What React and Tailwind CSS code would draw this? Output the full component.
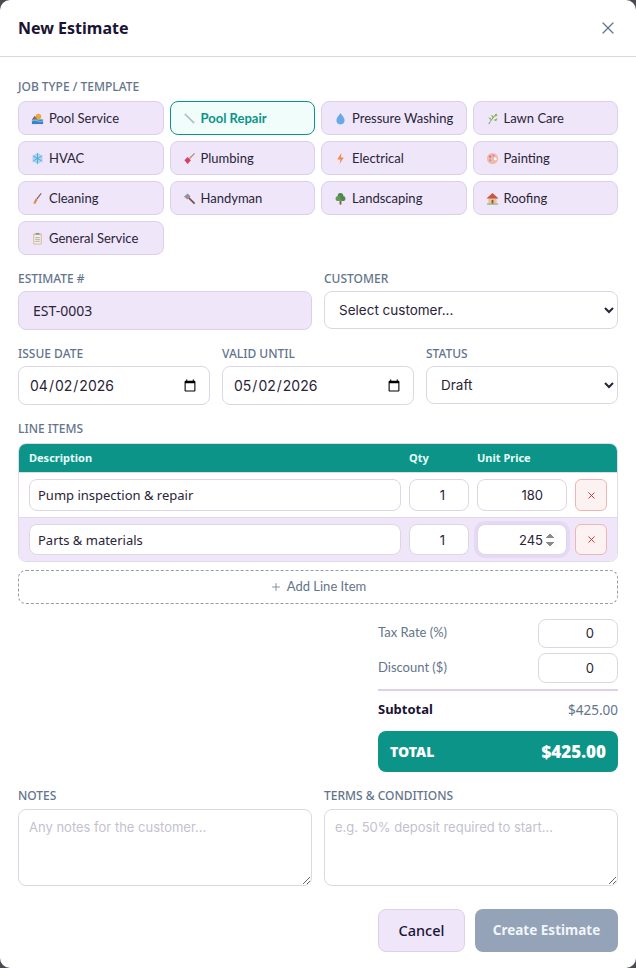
import { X, Plus } from 'lucide-react'

const labelCls = 'block text-[12px] leading-[14px] font-medium uppercase text-[#64748b] font-["Noto_Sans",sans-serif]'
const fieldCls = 'bg-white border border-[#ddd6e3] rounded-[8px] text-[13.5px] text-[#2a2438] font-["Inter",sans-serif] outline-none'

const Icon = ({ children }) => (
  <svg viewBox="0 0 14 14" className="w-[13px] h-[13px] shrink-0">{children}</svg>
)

const icons = {
  pool: (
    <Icon>
      <rect x="1" y="8" width="12" height="5" fill="#3b82c4" />
      <circle cx="8" cy="5" r="3" fill="#f0a63c" />
      <path d="M1 8l3-4 3 4z" fill="#7c6a5a" />
      <path d="M1 9.5q3-1.5 6 0t6 0" stroke="#8ecbf0" fill="none" />
    </Icon>
  ),
  wrench: (
    <Icon>
      <path d="M3 3l8 8" stroke="#b6bcc4" strokeWidth="1.8" strokeLinecap="round" />
      <path d="M1.5 3.5L3.5 1.5M10.5 12.5l2-2" stroke="#c8cdd3" strokeWidth="1.4" />
    </Icon>
  ),
  drop: (
    <Icon>
      <path d="M7 1C5 4 2.6 6.2 2.6 9a4.4 4.4 0 0 0 8.8 0C11.4 6.2 9 4 7 1z" fill="#6aa9e6" />
    </Icon>
  ),
  herb: (
    <Icon>
      <path d="M3 13C5 9 8 6 11 2" stroke="#6f9a3f" fill="none" />
      <path d="M5 9L2.5 6l3 .5zM7 7L5.5 3l3 1.5zM8 8.5l4.5-2-1.5 3.5zM9 5l3.5-1L11 1.5z" fill="#8bb755" />
    </Icon>
  ),
  snow: (
    <Icon>
      <circle cx="7" cy="7" r="5.5" fill="#a5d4ee" />
      <path d="M7 1v12M1.8 4l10.400 6M1.800 10l10.400-6" stroke="#5da4d0" strokeWidth="1" />
    </Icon>
  ),
  plunger: (
    <Icon>
      <path d="M7 7l5.500-5.500" stroke="#b98a5e" strokeWidth="1.3" />
      <path d="M1.500 9L5 5.500 8.500 9 5 13z" fill="#dc3f5e" />
    </Icon>
  ),
  bolt: (
    <Icon>
      <path d="M8 1L3.500 8H7l-1 5 4.500-7H7.500z" fill="#f08a4b" />
    </Icon>
  ),
  palette: (
    <Icon>
      <circle cx="7" cy="7" r="6" fill="#f2b8a8" />
      <circle cx="4.500" cy="5" r="1.100" fill="#d9607a" />
      <circle cx="8" cy="3.800" r="1.100" fill="#c77ad6" />
      <circle cx="4.500" cy="9" r="1.100" fill="#7aa6d6" />
      <circle cx="10" cy="7.500" r="1.500" fill="#fff" />
    </Icon>
  ),
  broom: (
    <Icon>
      <path d="M11 1.500L6 8" stroke="#7a5a48" strokeWidth="1.1" />
      <path d="M5 7l2 1.500L4.500 13 2.500 12z" fill="#e08a4c" />
    </Icon>
  ),
  hammer: (
    <Icon>
      <path d="M6 6l6.500 6.500" stroke="#7a4f4a" strokeWidth="1.8" />
      <path d="M1 5l4-3.500 3 3L5 8z" fill="#8f949c" />
    </Icon>
  ),
  tree: (
    <Icon>
      <rect x="6" y="9" width="2" height="4.500" fill="#8a5a3c" />
      <circle cx="7" cy="4" r="3" fill="#4e8a4a" />
      <circle cx="4.500" cy="7" r="2.800" fill="#5f9a57" />
      <circle cx="9.500" cy="7" r="2.800" fill="#4e8a4a" />
    </Icon>
  ),
  house: (
    <Icon>
      <rect x="2.500" y="6" width="9" height="6.500" fill="#e9c39a" />
      <path d="M.5 7L7 1l6.500 6z" fill="#c9573f" />
      <rect x="6" y="8.500" width="2" height="4" fill="#8a5a3c" />
      <rect x="1" y="12.500" width="12" height="1" fill="#6aa25a" />
    </Icon>
  ),
  clipboard: (
    <Icon>
      <rect x="2.500" y="1.500" width="9" height="12" rx="1" fill="#d9b48f" />
      <rect x="3.500" y="3" width="7" height="9.500" fill="#f1efe9" />
      <rect x="5" y="1" width="4" height="2" fill="#8f949c" />
      <path d="M4.500 6h5M4.500 8h5M4.500 10h5" stroke="#9aa0a8" strokeWidth=".8" />
    </Icon>
  ),
}

const jobTypes = [
  ['pool', 'Pool Service'],
  ['wrench', 'Pool Repair', true],
  ['drop', 'Pressure Washing'],
  ['herb', 'Lawn Care'],
  ['snow', 'HVAC'],
  ['plunger', 'Plumbing'],
  ['bolt', 'Electrical'],
  ['palette', 'Painting'],
  ['broom', 'Cleaning'],
  ['hammer', 'Handyman'],
  ['tree', 'Landscaping'],
  ['house', 'Roofing'],
  ['clipboard', 'General Service'],
]

function JobChip({ icon, name, active }) {
  return (
    <button
      type="button"
      className={
        active
          ? 'h-[34px] flex items-center gap-[5px] pl-[12px] rounded-[8px] border border-[#0d9488] bg-[#f0fdfa] text-[13px] font-bold text-[#0d9488] font-["Lato",sans-serif]'
          : 'h-[34px] flex items-center gap-[5px] pl-[12px] rounded-[8px] border border-[#ddd0ea] bg-[#efe6f9] text-[13px] text-[#2a2438] font-["Lato",sans-serif]'
      }
    >
      {icons[icon]}
      <span className="pt-px">{name}</span>
    </button>
  )
}

function LineRow({ desc, price, alt, focused }) {
  const h = alt ? 'h-[31px]' : 'h-[32px]'
  return (
    <div className={`flex gap-2 px-[10px] py-[6px] border-t border-[#e2daea] ${alt ? 'bg-[#efe6f9]' : 'bg-white'}`}>
      <input
        defaultValue={desc}
        className={`${fieldCls} flex-1 min-w-0 px-2 text-[13px] font-["Noto_Sans",sans-serif] ${h}`}
      />
      <input
        type="number"
        defaultValue="1"
        className={`${fieldCls} w-[60px] shrink-0 px-2 text-right text-[13px] ${h}`}
      />
      <input
        type="number"
        defaultValue={price}
        autoFocus={focused}
        className={`${fieldCls} w-[90px] shrink-0 px-2 text-right text-[13px] ${h} ${focused ? 'border-[#7c5cad] shadow-[0_0_0_3px_#e6d9f7]' : ''}`}
      />
      <button
        type="button"
        className={`w-[32px] shrink-0 flex items-center justify-center rounded-[6px] border border-[#f0b4b4] bg-[#fdf2f2] text-[#c92a2a] ${h}`}
      >
        <X size={11} strokeWidth={2} />
      </button>
    </div>
  )
}

export default function App() {
  return (
    <div className="min-h-[968px] bg-[#4a4a52] font-['Noto_Sans',sans-serif]">
      <div className="w-[636px] h-[968px] bg-white rounded-[10px] overflow-hidden">
        <div className="h-[57px] flex items-center justify-between px-[18px] border-b border-[#d9d9de]">
          <h2 className="text-[16px] font-bold text-[#1a1333]">New Estimate</h2>
          <X size={20} strokeWidth={1.5} className="text-[#64748b]" />
        </div>

        <div className="px-[18px] pt-[23px]">
          <label className={labelCls}>Job Type / Template</label>
          <div className="grid grid-cols-4 gap-[6px] mt-[7px]">
            {jobTypes.map(([icon, name, active]) => (
              <JobChip key={name} icon={icon} name={name} active={active} />
            ))}
          </div>

          <div className="grid grid-cols-2 gap-3 mt-[17px]">
            <div>
              <label className={labelCls}>Estimate #</label>
              <input
                defaultValue="EST-0003"
                className="mt-[5px] w-full h-[39px] px-[14px] rounded-[8px] border border-[#ddd0ea] bg-[#efe6f9] text-[14px] text-[#2a2438] outline-none"
              />
            </div>
            <div>
              <label className={labelCls}>Customer</label>
              <select className={`${fieldCls} w-full mt-[5px] h-[38px] px-[10px]`}>
                <option>Select customer...</option>
              </select>
            </div>
          </div>

          <div className="grid grid-cols-3 gap-3 mt-[17px]">
            <div>
              <label className={labelCls}>Issue Date</label>
              <input type="date" defaultValue="2026-04-02" className={`${fieldCls} w-full mt-[5px] h-[39px] px-[10px] text-[14px]`} />
            </div>
            <div>
              <label className={labelCls}>Valid Until</label>
              <input type="date" defaultValue="2026-05-02" className={`${fieldCls} w-full mt-[5px] h-[39px] px-[10px] text-[14px]`} />
            </div>
            <div>
              <label className={labelCls}>Status</label>
              <select className={`${fieldCls} w-full mt-[5px] h-[38px] px-[10px]`}>
                <option>Draft</option>
              </select>
            </div>
          </div>

          <label className={`${labelCls} mt-[17px]`}>Line Items</label>
          <div className="mt-[7px] rounded-[8px] border border-[#e2daea] overflow-hidden">
            <div className="h-[28px] flex items-center gap-2 px-[10px] bg-[#0d9488] text-[11px] font-bold text-[#e6fffa]">
              <span className="flex-1">Description</span>
              <span className="w-[60px]">Qty</span>
              <span className="w-[90px]">Unit Price</span>
              <span className="w-[32px]"></span>
            </div>
            <LineRow desc="Pump inspection & repair" price="180" />
            <LineRow desc="Parts & materials" price="245" alt focused />
          </div>

          <button
            type="button"
            className="mt-[8px] w-full h-[34px] flex items-center justify-center gap-[5px] rounded-[8px] border border-dashed border-[#9a9aa2] text-[13px] text-[#64748b] font-['Lato',sans-serif]"
          >
            <Plus size={12} strokeWidth={1.5} />
            Add Line Item
          </button>

          <div className="ml-auto w-[240px] mt-[14px]">
            <div className="flex items-center justify-between h-[30px]">
              <span className="text-[13px] text-[#64748b] whitespace-nowrap font-['Lato',sans-serif]">Tax Rate (%)</span>
              <input type="number" defaultValue="0" className={`${fieldCls} w-[80px] h-[29px] px-2 text-right text-[13px]`} />
            </div>
            <div className="flex items-center justify-between h-[30px] mt-[5px]">
              <span className="text-[13px] text-[#64748b] whitespace-nowrap font-['Lato',sans-serif]">Discount ($)</span>
              <input type="number" defaultValue="0" className={`${fieldCls} w-[80px] h-[30px] px-2 text-right text-[13px]`} />
            </div>
            <div className="mt-[6px] pt-[10px] pb-[12px] border-t-2 border-[#ddd0ea] flex items-center justify-between h-[42px]">
              <span className="text-[13px] font-bold text-[#1a1333]">Subtotal</span>
              <span className="text-[13.500px] text-[#64748b]">$425.00</span>
            </div>
            <div className="h-[41px] flex items-center justify-between px-[12px] rounded-[8px] bg-[#0d9488] text-white font-black">
              <span className="text-[14px]">TOTAL</span>
              <span className="text-[17px]">$425.00</span>
            </div>
          </div>

          <div className="grid grid-cols-2 gap-3 mt-[17px]">
            <div>
              <label className={labelCls}>Notes</label>
              <textarea
                placeholder="Any notes for the customer..."
                className={`${fieldCls} w-full block mt-[6px] h-[77px] px-[10px] py-[8px] text-[13px] placeholder:text-[#c5bfd0]`}
              />
            </div>
            <div>
              <label className={labelCls}>Terms & Conditions</label>
              <textarea
                placeholder="e.g. 50% deposit required to start..."
                className={`${fieldCls} w-full block mt-[6px] h-[77px] px-[10px] py-[8px] text-[13px] placeholder:text-[#c5bfd0]`}
              />
            </div>
          </div>

          <div className="flex justify-end gap-[10px] mt-[23px]">
            <button
              type="button"
              className="w-[87px] h-[43px] rounded-[8px] border border-[#ddd0ea] bg-[#efe6f9] text-[14.5px] font-medium text-[#1a1333]"
            >
              Cancel
            </button>
            <button
              type="button"
              className="w-[143px] h-[43px] rounded-[8px] bg-[#94a3b8] text-[13.500px] font-bold text-[#f1f5f9]"
            >
              Create Estimate
            </button>
          </div>
        </div>
      </div>
    </div>
  )
}
